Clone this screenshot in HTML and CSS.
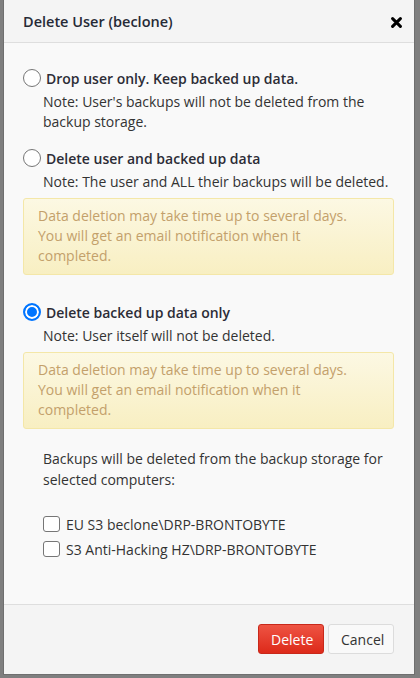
FILE: index.html
```html
<!DOCTYPE html>
<html>
<head>
<meta charset="utf-8">
<link rel="stylesheet" href="styles.css">
</head>
<body>
<div class="modal">
  <div class="modal-header">
    <span class="modal-title">Delete User (beclone)</span>
    <svg class="close" width="11" height="11" viewBox="0 0 11 11"><path d="M1.6 1.6 L9.4 9.4 M9.4 1.6 L1.6 9.4" stroke="#000" stroke-width="3" stroke-linecap="round"/></svg>
  </div>
  <div class="modal-body">
    <label class="option first"><input type="radio" name="mode"><span>Drop user only. Keep backed up data.</span></label>
    <div class="note">Note: User's backups will not be deleted from the backup storage.</div>

    <label class="option"><input type="radio" name="mode"><span>Delete user and backed up data</span></label>
    <div class="note">Note: The user and ALL their backups will be deleted.</div>
    <div class="alert">Data deletion may take time up to several days. You will get an email notification when it completed.</div>

    <label class="option third"><input type="radio" name="mode" checked><span>Delete backed up data only</span></label>
    <div class="note">Note: User itself will not be deleted.</div>
    <div class="alert">Data deletion may take time up to several days. You will get an email notification when it completed.</div>

    <div class="computers">
      <p class="intro">Backups will be deleted from the backup storage for selected computers:</p>
      <label class="check first"><input type="checkbox"><span>EU S3 beclone\DRP-BRONTOBYTE</span></label>
      <label class="check"><input type="checkbox"><span>S3 Anti-Hacking HZ\DRP-BRONTOBYTE</span></label>
    </div>
  </div>
  <div class="modal-footer">
    <button class="btn btn-danger">Delete</button>
    <button class="btn btn-default">Cancel</button>
  </div>
</div>
</body>
</html>
```

FILE: styles.css
```css
html, body {
  margin: 0;
  padding: 0;
  background: #7f7f7f;
}
body {
  width: 420px;
  height: 678px;
  overflow: hidden;
  font-family: "Open Sans", "Noto Sans", sans-serif;
  font-size: 14px;
  color: #333;
}
.modal {
  margin-left: 3px;
  width: 412px;
  height: 675px;
  box-sizing: border-box;
  border: 1px solid #6f6f6f;
  border-top: none;
  background: #f9f9f9;
  display: flex;
  flex-direction: column;
}
.modal-header {
  height: 43px;
  box-sizing: border-box;
  background: #f4f4f4;
  border-bottom: 1px solid #dedede;
  display: flex;
  align-items: center;
  justify-content: space-between;
  padding: 0 12px 0 19px;
  flex: none;
}
.modal-title {
  font-weight: 600;
  font-size: 14.5px;
  color: #262a36;
  margin-top: 1px;
}
.close {
  display: block;
  margin-top: 3px;
}
.modal-body {
  flex: 1;
  padding: 25px 20px 0 19px;
}
.option {
  display: flex;
  align-items: center;
  height: 20px;
  margin-top: 16px;
  font-weight: 600;
  color: #2c2c36;
}
.option.first { margin-top: 0; }
.option.third { margin-top: 27px; }
.option input {
  appearance: none;
  -webkit-appearance: none;
  width: 18px;
  height: 18px;
  margin: 0 5px 0 0;
  border: 1px solid #767676;
  border-radius: 50%;
  background: #fff;
  box-sizing: border-box;
  flex: none;
}
.option input:checked {
  border: 2px solid #0075ff;
  background: #0075ff;
  box-shadow: inset 0 0 0 2px #fff;
}
.note {
  margin: 4px 0 0 20px;
  line-height: 20px;
}
.alert {
  margin-top: 6px;
  padding: 7px 35px 8px 14px;
  line-height: 20px;
  border: 1px solid #f4e7a8;
  border-radius: 3px;
  background: linear-gradient(#fcf8e3, #f8efc2);
  color: #c3a06b;
}
.computers {
  margin: 19px 0 0 20px;
}
.intro {
  margin: 0;
  line-height: 21px;
}
.check {
  display: flex;
  align-items: center;
  height: 20px;
  margin-top: 5px;
}
.check.first { margin-top: 24px; }
.check input {
  appearance: none;
  -webkit-appearance: none;
  width: 17px;
  height: 16px;
  margin: 0 6px 0 0;
  border: 1px solid #767676;
  border-radius: 3px;
  background: #fff;
  box-sizing: border-box;
  flex: none;
}
.modal-footer {
  flex: none;
  border-top: 1px solid #dedede;
  background: #f4f4f4;
  padding: 19px 20px 20px;
  display: flex;
  justify-content: flex-end;
  gap: 4px;
}
.btn {
  height: 30px;
  box-sizing: border-box;
  border-radius: 3px;
  font-family: "Open Sans", "Noto Sans", sans-serif;
  font-size: 14px;
  padding: 0 12px;
}
.btn-danger {
  width: 66px;
  color: #fff;
  border: 1px solid #c8281a;
  background: linear-gradient(#ee5443, #dd2a1a);
}
.btn-default {
  width: 66px;
  color: #333;
  border: 1px solid #dcdcdc;
  background: #f9f9f9;
}
```
